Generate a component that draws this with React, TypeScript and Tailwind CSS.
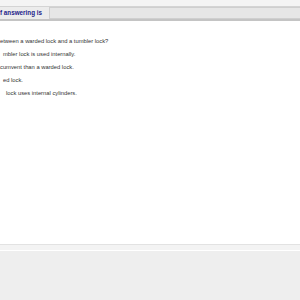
export default function App() {
  const lines = [
    { t: "etween a warded lock and a tumbler lock?", pl: "pl-0" },
    { t: "mbler lock is used internally.", pl: "pl-[3px]" },
    { t: "cumvent than a warded lock.", pl: "pl-0" },
    { t: "ed lock.", pl: "pl-[3px]" },
    { t: "lock uses internal cylinders.", pl: "pl-[6px]" },
  ];
  return (
    <div className="w-[300px] h-[300px] flex flex-col bg-white overflow-hidden" style={{ fontFamily: '"Liberation Sans", Arial, sans-serif' }}>
      <div className="h-[7px] bg-[#f4f4f4] border-b border-[#d4d4d4]" />
      <div className="h-[14px] flex items-center bg-[#ececec] border-b-2 border-[#c4c4c4]">
        <span className="text-[6.3px] font-bold text-[#22228a] leading-none whitespace-nowrap pl-0">f answering is</span>
        <div className="ml-[7px] flex-1 h-[12px] bg-[#e6e6e6] border border-[#cfcfcf] border-r-0" />
      </div>
      <div className="flex-1 flex flex-col pt-[17px] gap-[7px]">
        {lines.map((l, i) => (
          <div key={i} className={`text-[5.8px] leading-[6px] text-[#333] whitespace-nowrap ${l.pl}`}>{l.t}</div>
        ))}
      </div>
      <div className="h-[7px] bg-[#f3f3f3] border-t border-[#e2e2e2] border-b border-b-white" />
      <div className="h-[49px] bg-[#eeeeee]" />
    </div>
  );
}
